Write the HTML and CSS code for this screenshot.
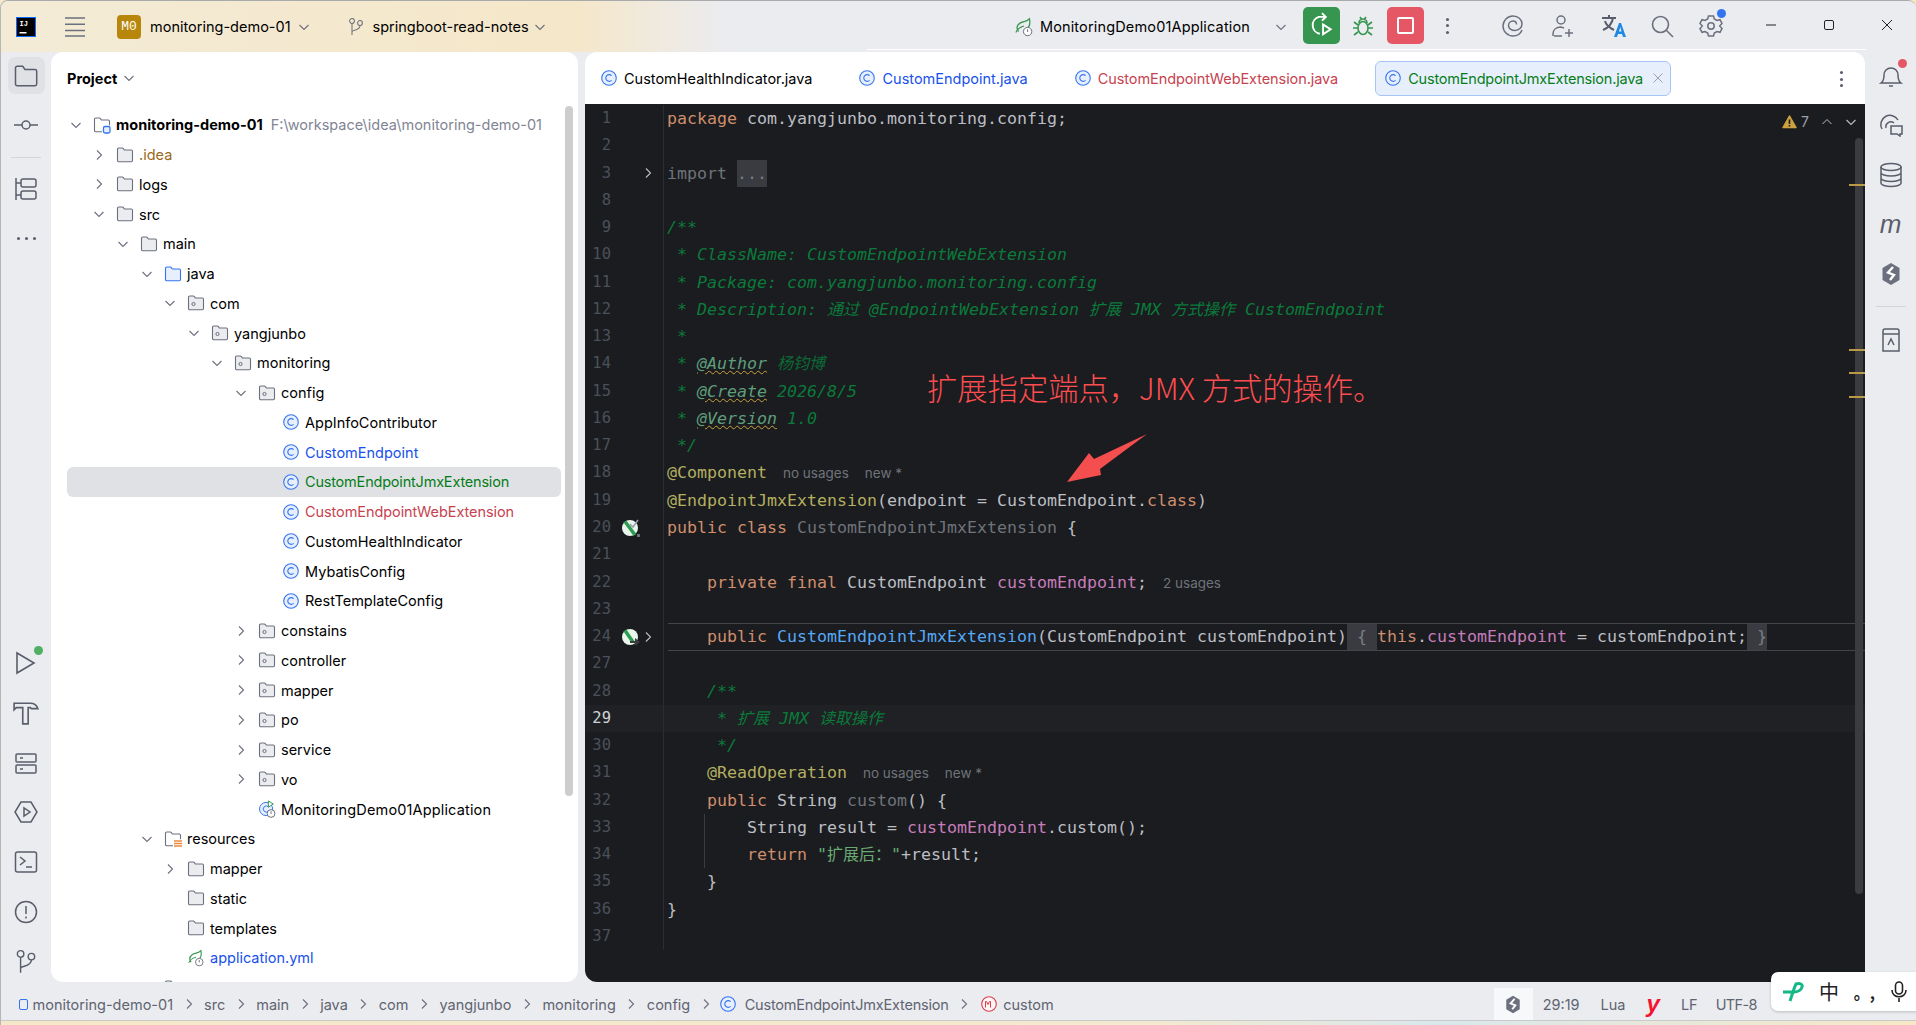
FILE: index.html
```html
<!DOCTYPE html>
<html lang="zh-CN">
<head>
    <meta charset="UTF-8">
    <meta name="viewport" content="width=device-width, initial-scale=1.0">
    <link rel="stylesheet" href="styles.css">
    <title>monitoring-demo-01</title>
</head>
<body>
<svg class="defs" width="0" height="0">
    <defs>
        <symbol id="folder" viewBox="0 0 18 18"><path d="M1.500 14.500V3.200C1.500 2.500 2 2 2.700 2h3.600c.5 0 .8.2 1.100.6l1 1.400h6.900c.9 0 1.200.5 1.200 1.200v9.300c0 .7-.5 1.200-1.200 1.200H2.700c-.7 0-1.200-.5-1.200-1.200z" fill="#EBECF0" stroke="#6C707E" stroke-width="1.100"/></symbol>
        <symbol id="folder-blue" viewBox="0 0 18 18"><path d="M1.500 14.500V3.200C1.500 2.500 2 2 2.700 2h3.600c.5 0 .8.2 1.100.6l1 1.400h6.900c.9 0 1.200.5 1.200 1.200v9.300c0 .7-.5 1.200-1.200 1.200H2.700c-.7 0-1.200-.5-1.200-1.200z" fill="#E7EFFD" stroke="#3574F0" stroke-width="1.100"/></symbol>
        <symbol id="root" viewBox="0 0 18 18"><path d="M1.500 14.500V3.200C1.500 2.500 2 2 2.700 2h3.600c.5 0 .8.2 1.100.6l1 1.400h6.900c.9 0 1.200.5 1.200 1.200v4.100M9 15.700H2.700c-.7 0-1.200-.5-1.200-1.200" fill="none" stroke="#6C707E" stroke-width="1.100"/><rect x="10.500" y="10.500" width="6.500" height="6.500" rx="1.500" fill="#E7EFFD" stroke="#3574F0" stroke-width="1.300"/></symbol>
        <symbol id="res" viewBox="0 0 18 18"><path d="M1.500 14.500V3.200C1.500 2.500 2 2 2.700 2h3.600c.5 0 .8.2 1.100.6l1 1.400h6.900c.9 0 1.200.5 1.200 1.200v4.100M9 15.700H2.700c-.7 0-1.200-.5-1.200-1.200" fill="none" stroke="#6C707E" stroke-width="1.100"/><path d="M10 11h8M10 13.500h8M10 16h8" stroke="#E98A3C" stroke-width="1.500"/></symbol>
        <symbol id="pkg" viewBox="0 0 18 18"><path d="M1.500 14.500V3.200C1.500 2.500 2 2 2.700 2h3.600c.5 0 .8.2 1.100.6l1 1.400h6.900c.9 0 1.200.5 1.200 1.200v9.300c0 .7-.5 1.200-1.200 1.200H2.700c-.7 0-1.200-.5-1.200-1.200z" fill="#EBECF0" stroke="#6C707E" stroke-width="1.100"/><circle cx="6.500" cy="10" r="1.600" fill="none" stroke="#6C707E"/></symbol>
        <symbol id="cls" viewBox="0 0 18 18"><circle cx="9" cy="9" r="7.300" fill="#E7EFFD" stroke="#3574F0" stroke-width="1.100"/><path d="M11.600 6.600a3.400 3.400 0 1 0 0 4.800" fill="none" stroke="#3574F0" stroke-width="1.100"/></symbol>
        <symbol id="app" viewBox="0 0 20 20"><circle cx="9" cy="10" r="7.300" fill="#E7EFFD" stroke="#3574F0" stroke-width="1.100"/><path d="M11.600 7.600a3.400 3.400 0 1 0 0 4.800" fill="none" stroke="#3574F0" stroke-width="1.100"/><path d="M11.500 1v7l5.500-3.500z" fill="#fff" stroke="#369650" stroke-width="1.100"/><circle cx="14.500" cy="15" r="4.300" fill="#fff" stroke="#6C707E" stroke-width="1.100"/><path d="M14.500 12.500v3" stroke="#6C707E" stroke-width="1.100"/></symbol>
        <symbol id="arrow-right" viewBox="0 0 12 12"><path d="M4 1.500 8.500 6 4 10.500" fill="none" stroke="currentColor" stroke-width="1.100"/></symbol>
        <symbol id="arrow-down" viewBox="0 0 12 12"><path d="M1.500 4 6 8.500 10.500 4" fill="none" stroke="currentColor" stroke-width="1.100"/></symbol>
        <symbol id="hex" viewBox="0 0 20 24"><path d="M10 1 18.500 6v12L10 23 1.500 18V6z" fill="#6C707E"/><path d="M12 5 7 10.500l6 2.500-4 5" fill="none" stroke="#fff" stroke-width="2.400"/></symbol>
        <symbol id="spring" viewBox="0 0 22 22"><path d="M5 16C1 11 5 6 11 5c3-.5 5-2 6-3 1 5 0 9-3 11" fill="none" stroke="#369650" stroke-width="1.400"/><path d="M2 17c2-4 5-6 9-7" fill="none" stroke="#369650" stroke-width="1.200"/><circle cx="15" cy="16" r="4.600" fill="#fff" stroke="#6C707E" stroke-width="1.100"/><path d="M15 13.500v3" stroke="#6C707E" stroke-width="1.100"/></symbol>
        <symbol id="branch" viewBox="0 0 20 24"><circle cx="5" cy="4.500" r="3" fill="none" stroke="currentColor" stroke-width="1.300"/><circle cx="15" cy="7" r="3" fill="none" stroke="currentColor" stroke-width="1.300"/><path d="M5 7.500V22M5 18c0-3 10-1 10-8" fill="none" stroke="currentColor" stroke-width="1.300"/></symbol>
        <symbol id="gut-impl" viewBox="0 0 20 20"><circle cx="9" cy="10" r="8" fill="#E9F6EC"/><path d="M4 3.500 14 17" stroke="#2E9C52" stroke-width="3.500"/><path d="M9 6l3 3 5-7" fill="none" stroke="#9DA0A8" stroke-width="1.500"/><path d="M16 16h3v3h-3z" fill="#6F737A"/></symbol>
        <symbol id="gut-arrow" viewBox="0 0 20 20"><circle cx="9" cy="10" r="8" fill="#E9F6EC"/><path d="M4 3.500 12 15" stroke="#2E9C52" stroke-width="3.500"/><path d="M9 14h5v-3l5 4-5 4v-3H9z" fill="#3A3C3F"/></symbol>
    </defs>
</svg>

<div class="window">

    <header class="titlebar">
        <svg class="ide-logo" viewBox="0 0 20 20" width="20" height="20"><rect x=".5" y=".5" width="19" height="19" fill="#000" stroke="#0A6CFF"/><text x="3.500" y="9" class="ide-logo-text">IJ</text><rect x="3.500" y="15" width="7" height="1.500" fill="#fff"/></svg>
        <svg class="burger" viewBox="0 0 20 20" width="20" height="20"><path d="M0 1h20M0 7.300h20M0 13.600h20M0 19h20" stroke="#6C707E" stroke-width="1.500"/></svg>
        <span class="project-badge">M0</span>
        <span class="tb-text tb-project">monitoring-demo-01</span>
        <svg class="chev tb-chev1" width="12" height="12"><use href="#arrow-down"/></svg>
        <svg class="branch-icon" width="16" height="20"><use href="#branch"/></svg>
        <span class="tb-text tb-branch">springboot-read-notes</span>
        <svg class="chev tb-chev2" width="12" height="12"><use href="#arrow-down"/></svg>

        <div class="tb-spacer"></div>

        <svg class="tb-run-icon" width="20" height="20"><use href="#spring"/></svg>
        <span class="tb-text tb-config t-wide">MonitoringDemo01Application</span>
        <svg class="chev tb-chev3" width="12" height="12"><use href="#arrow-down"/></svg>
        <span class="btn-run">
            <svg viewBox="0 0 24 24" width="26" height="26" fill="none" stroke="#fff" stroke-width="1.800"><path d="M10 20A8 8 0 0 1 9 4.500h6M12 1l3.500 3.500L12 8"/><path d="M13 11.500v9l7-4.500z"/></svg>
        </span>
        <svg class="bug" viewBox="0 0 22 22" width="22" height="22" fill="none" stroke="#369650" stroke-width="1.600"><ellipse cx="11" cy="13" rx="5" ry="6.500"/><path d="M7 8a4 4 0 0 1 8 0M8 2l2 3M14 2l-2 3M1 13h5M16 13h5M2 7l4 3M20 7l-4 3M2 20l4-3M20 20l-4-3"/></svg>
        <span class="btn-stop"><i class="stop-square"></i></span>
        <span class="dots-v tb-more"><i></i><i></i><i></i></span>
        <svg class="tb-ic tb-swirl" viewBox="0 0 22 22" width="22" height="22" fill="none" stroke="#6C707E" stroke-width="1.500"><path d="M20 15c-1.500 4-5 6-9 6-5.500 0-10-4.500-10-10S5.500 1 11 1c5 0 9 3.500 9 8 0 3.500-3 6.500-7 6.500-3.500 0-6.500-2-6.500-5 0-2.500 2-4.500 4.500-4.500 2 0 3.500 1.500 3.500 3.500"/></svg>
        <svg class="tb-ic tb-person" viewBox="0 0 24 24" width="24" height="24" fill="none" stroke="#6C707E" stroke-width="1.500"><circle cx="10" cy="6" r="4"/><path d="M2 22v-2c0-4 3-7 8-7l3 1M11 22H3M18 15v8M14 19h8"/></svg>
        <svg class="tb-ic tb-trans" viewBox="0 0 26 26" width="26" height="26"><path d="M2 5h14M9 2v3M13 5c-1 6-5 10-10 12M5 8c1 4 5 7 9 9" fill="none" stroke="#5A5D6B" stroke-width="2"/><path d="M14 24l5-14h2l5 14h-3l-1-3h-4l-1 3zM19 18.500h2.500L20.300 14z" fill="#1E88E5"/></svg>
        <svg class="tb-ic tb-search" viewBox="0 0 24 24" width="24" height="24" fill="none" stroke="#6C707E" stroke-width="1.600"><circle cx="10.500" cy="10.500" r="8"/><path d="M16.500 16.500 23 23"/></svg>
        <span class="tb-gear">
            <svg viewBox="0 0 24 24" width="24" height="24" fill="none" stroke="#6C707E" stroke-width="1.500"><path d="M9.500 2h5l.8 3 2.700 1.500 3-.8 2 3.800-2.300 2.500 2.300 2.500-2 3.800-3-.8L15.300 19l-.8 3h-5l-.8-3L6 17.500l-3 .8-2-3.800L3.300 12 1 9.500l2-3.800 3 .8L8.700 5z"/><circle cx="12" cy="12" r="3.200"/></svg>
            <i class="dot-blue"></i>
        </span>
        <div class="win-controls">
            <svg width="12" height="12"><path d="M1 6h10" stroke="#222" stroke-width="1"/></svg>
            <svg width="12" height="12"><rect x="1.500" y="1.500" width="9" height="9" rx="1.500" fill="none" stroke="#222"/></svg>
            <svg width="12" height="12"><path d="M1 1l10 10M11 1 1 11" stroke="#222"/></svg>
        </div>
    </header>

    <div class="workspace">

        <aside class="stripe stripe-left">
            <div class="stripe-group">
                <span class="stripe-btn active"><svg viewBox="0 0 24 24" width="24" height="24" fill="none" stroke="#5A5D6B" stroke-width="1.500"><path d="M1.500 20V4c0-1 .7-1.700 1.700-1.700h5.500L11 5.500h10c1 0 1.700.7 1.700 1.700V20c0 1-.7 1.700-1.700 1.700H3.200c-1 0-1.700-.7-1.700-1.700z"/></svg></span>
                <span class="stripe-btn"><svg viewBox="0 0 24 24" width="24" height="24" fill="none" stroke="#5A5D6B" stroke-width="1.500"><circle cx="12" cy="12" r="4"/><path d="M0 12h8M16 12h8"/></svg></span>
                <span class="stripe-sep"></span>
                <span class="stripe-btn"><svg viewBox="0 0 24 24" width="24" height="24" fill="none" stroke="#5A5D6B" stroke-width="1.500"><path d="M2 1v22M2 6h5M2 18h5"/><rect x="7" y="2" width="15" height="8" rx="2"/><rect x="7" y="14" width="15" height="8" rx="2"/></svg></span>
                <span class="stripe-btn"><span class="dots-h"><i></i><i></i><i></i></span></span>
            </div>
            <div class="stripe-group">
                <span class="stripe-btn run-ic"><svg viewBox="0 0 24 24" width="24" height="24" fill="none" stroke="#5A5D6B" stroke-width="1.600"><path d="M3 2v20l17-10z"/></svg><i class="dot-green"></i></span>
                <span class="stripe-btn"><svg viewBox="0 0 24 24" width="26" height="26" fill="none" stroke="#5A5D6B" stroke-width="1.500"><path d="M1 3h15c3 0 6 2 7 5h-6l-1-1h-2v15H9V7H3L1 9z"/></svg></span>
                <span class="stripe-btn"><svg viewBox="0 0 24 24" width="24" height="24" fill="none" stroke="#5A5D6B" stroke-width="1.500"><rect x="2" y="3" width="20" height="8" rx="1"/><rect x="2" y="14" width="20" height="8" rx="1"/><path d="M6 7h3M6 18h3"/></svg></span>
                <span class="stripe-btn"><svg viewBox="0 0 24 24" width="24" height="24" fill="none" stroke="#5A5D6B" stroke-width="1.500"><path d="M7 2h10l6 10-6 10H7L1 12z"/><path d="M10 8v8l6-4z"/></svg></span>
                <span class="stripe-btn"><svg viewBox="0 0 24 24" width="24" height="24" fill="none" stroke="#5A5D6B" stroke-width="1.500"><rect x="1.500" y="2" width="21" height="20" rx="2"/><path d="M6 7l5 4-5 4M12 17h6"/></svg></span>
                <span class="stripe-btn"><svg viewBox="0 0 24 24" width="24" height="24" fill="none" stroke="#5A5D6B" stroke-width="1.500"><circle cx="12" cy="12" r="10.500"/><path d="M12 6v8M12 16.500v2"/></svg></span>
                <span class="stripe-btn stripe-last"><svg class="stripe-git" width="22" height="26"><use href="#branch"/></svg></span>
            </div>
        </aside>

        <section class="project-panel">
            <div class="panel-head"><b>Project</b><svg class="chev" width="12" height="12"><use href="#arrow-down"/></svg></div>
            <div class="tree">
                <div class="tree-row lvl0"><svg class="chev" width="12" height="12"><use href="#arrow-down"/></svg><svg class="ti" width="18" height="18"><use href="#root"/></svg><b>monitoring-demo-01</b><span class="path">F:\workspace\idea\monitoring-demo-01</span></div>
                <div class="tree-row lvl1"><svg class="chev" width="12" height="12"><use href="#arrow-right"/></svg><svg class="ti" width="18" height="18"><use href="#folder"/></svg><span class="t-idea">.idea</span></div>
                <div class="tree-row lvl1"><svg class="chev" width="12" height="12"><use href="#arrow-right"/></svg><svg class="ti" width="18" height="18"><use href="#folder"/></svg>logs</div>
                <div class="tree-row lvl1"><svg class="chev" width="12" height="12"><use href="#arrow-down"/></svg><svg class="ti" width="18" height="18"><use href="#folder"/></svg>src</div>
                <div class="tree-row lvl2"><svg class="chev" width="12" height="12"><use href="#arrow-down"/></svg><svg class="ti" width="18" height="18"><use href="#folder"/></svg>main</div>
                <div class="tree-row lvl3"><svg class="chev" width="12" height="12"><use href="#arrow-down"/></svg><svg class="ti" width="18" height="18"><use href="#folder-blue"/></svg>java</div>
                <div class="tree-row lvl4"><svg class="chev" width="12" height="12"><use href="#arrow-down"/></svg><svg class="ti" width="18" height="18"><use href="#pkg"/></svg>com</div>
                <div class="tree-row lvl5"><svg class="chev" width="12" height="12"><use href="#arrow-down"/></svg><svg class="ti" width="18" height="18"><use href="#pkg"/></svg>yangjunbo</div>
                <div class="tree-row lvl6"><svg class="chev" width="12" height="12"><use href="#arrow-down"/></svg><svg class="ti" width="18" height="18"><use href="#pkg"/></svg>monitoring</div>
                <div class="tree-row lvl7"><svg class="chev" width="12" height="12"><use href="#arrow-down"/></svg><svg class="ti" width="18" height="18"><use href="#pkg"/></svg>config</div>
                <div class="tree-row lvl8"><span class="no-chev"></span><svg class="ti" width="18" height="18"><use href="#cls"/></svg>AppInfoContributor</div>
                <div class="tree-row lvl8"><span class="no-chev"></span><svg class="ti" width="18" height="18"><use href="#cls"/></svg><span class="t-blue">CustomEndpoint</span></div>
                <div class="tree-row lvl8 selected"><span class="no-chev"></span><svg class="ti" width="18" height="18"><use href="#cls"/></svg><span class="t-green t-narrow">CustomEndpointJmxExtension</span></div>
                <div class="tree-row lvl8"><span class="no-chev"></span><svg class="ti" width="18" height="18"><use href="#cls"/></svg><span class="t-red t-tight">CustomEndpointWebExtension</span></div>
                <div class="tree-row lvl8"><span class="no-chev"></span><svg class="ti" width="18" height="18"><use href="#cls"/></svg>CustomHealthIndicator</div>
                <div class="tree-row lvl8"><span class="no-chev"></span><svg class="ti" width="18" height="18"><use href="#cls"/></svg>MybatisConfig</div>
                <div class="tree-row lvl8"><span class="no-chev"></span><svg class="ti" width="18" height="18"><use href="#cls"/></svg>RestTemplateConfig</div>
                <div class="tree-row lvl7"><svg class="chev" width="12" height="12"><use href="#arrow-right"/></svg><svg class="ti" width="18" height="18"><use href="#pkg"/></svg>constains</div>
                <div class="tree-row lvl7"><svg class="chev" width="12" height="12"><use href="#arrow-right"/></svg><svg class="ti" width="18" height="18"><use href="#pkg"/></svg>controller</div>
                <div class="tree-row lvl7"><svg class="chev" width="12" height="12"><use href="#arrow-right"/></svg><svg class="ti" width="18" height="18"><use href="#pkg"/></svg>mapper</div>
                <div class="tree-row lvl7"><svg class="chev" width="12" height="12"><use href="#arrow-right"/></svg><svg class="ti" width="18" height="18"><use href="#pkg"/></svg>po</div>
                <div class="tree-row lvl7"><svg class="chev" width="12" height="12"><use href="#arrow-right"/></svg><svg class="ti" width="18" height="18"><use href="#pkg"/></svg>service</div>
                <div class="tree-row lvl7"><svg class="chev" width="12" height="12"><use href="#arrow-right"/></svg><svg class="ti" width="18" height="18"><use href="#pkg"/></svg>vo</div>
                <div class="tree-row lvl7"><span class="no-chev"></span><svg class="ti" width="18" height="18"><use href="#app"/></svg><span class="t-wide">MonitoringDemo01Application</span></div>
                <div class="tree-row lvl3"><svg class="chev" width="12" height="12"><use href="#arrow-down"/></svg><svg class="ti" width="18" height="18"><use href="#res"/></svg>resources</div>
                <div class="tree-row lvl4"><svg class="chev" width="12" height="12"><use href="#arrow-right"/></svg><svg class="ti" width="18" height="18"><use href="#folder"/></svg>mapper</div>
                <div class="tree-row lvl4"><span class="no-chev"></span><svg class="ti" width="18" height="18"><use href="#folder"/></svg>static</div>
                <div class="tree-row lvl4"><span class="no-chev"></span><svg class="ti" width="18" height="18"><use href="#folder"/></svg>templates</div>
                <div class="tree-row lvl4"><span class="no-chev"></span><svg class="ti" width="18" height="18"><use href="#spring"/></svg><span class="t-link">application.yml</span></div>
                <div class="tree-row lvl3"><span class="no-chev"></span><svg class="ti" width="18" height="18"><use href="#folder"/></svg></div>
            </div>
            <div class="tree-scroll"></div>
        </section>

        <section class="editor-panel">
            <div class="tabs">
                <div class="tab"><svg width="18" height="18"><use href="#cls"/></svg>CustomHealthIndicator.java</div>
                <div class="tab t-blue"><svg width="18" height="18"><use href="#cls"/></svg>CustomEndpoint.java</div>
                <div class="tab t-red t-tight"><svg width="18" height="18"><use href="#cls"/></svg>CustomEndpointWebExtension.java</div>
                <div class="tab tab-active t-green t-narrow"><svg width="18" height="18"><use href="#cls"/></svg>CustomEndpointJmxExtension.java<svg class="tab-x" width="12" height="12"><path d="M1.500 1.500l9 9M10.500 1.500l-9 9" stroke="#9DA0A8"/></svg></div>
                <span class="dots-v tabs-more"><i></i><i></i><i></i></span>
            </div>
            <div class="code">
                <div class="line"><span class="ln">1</span><span class="gut"></span><span class="src"><k>package</k> com.yangjunbo.monitoring.config;</span></div>
                <div class="line"><span class="ln">2</span><span class="gut"></span><span class="src"></span></div>
                <div class="line"><span class="ln">3</span><span class="gut"><svg class="fold" width="12" height="12"><use href="#arrow-right"/></svg></span><span class="src"><k class="dim">import</k> <span class="folded">...</span></span></div>
                <div class="line"><span class="ln">8</span><span class="gut"></span><span class="src"></span></div>
                <div class="line"><span class="ln">9</span><span class="gut"></span><span class="src"><d>/**</d></span></div>
                <div class="line"><span class="ln">10</span><span class="gut"></span><span class="src"><d> * ClassName: CustomEndpointWebExtension</d></span></div>
                <div class="line"><span class="ln">11</span><span class="gut"></span><span class="src"><d> * Package: com.yangjunbo.monitoring.config</d></span></div>
                <div class="line"><span class="ln">12</span><span class="gut"></span><span class="src"><d> * Description: <c>通过</c> @EndpointWebExtension <c>扩展</c> JMX <c>方式操作</c> CustomEndpoint</d></span></div>
                <div class="line"><span class="ln">13</span><span class="gut"></span><span class="src"><d> *</d></span></div>
                <div class="line"><span class="ln">14</span><span class="gut"></span><span class="src"><d> * <u>@Author</u> <c class="tag-cjk">杨钧博</c></d></span></div>
                <div class="line"><span class="ln">15</span><span class="gut"></span><span class="src"><d> * <u>@Create</u> 2026/8/5</d></span></div>
                <div class="line"><span class="ln">16</span><span class="gut"></span><span class="src"><d> * <u>@Version</u> 1.0</d></span></div>
                <div class="line"><span class="ln">17</span><span class="gut"></span><span class="src"><d> */</d></span></div>
                <div class="line"><span class="ln">18</span><span class="gut"></span><span class="src"><a>@Component</a><span class="hint">no usages</span><span class="hint">new *</span></span></div>
                <div class="line"><span class="ln">19</span><span class="gut"></span><span class="src"><a>@EndpointJmxExtension</a>(endpoint = CustomEndpoint.<k>class</k>)</span></div>
                <div class="line"><span class="ln">20</span><span class="gut"><svg width="20" height="20"><use href="#gut-impl"/></svg></span><span class="src"><k>public class</k> <span class="unused">CustomEndpointJmxExtension</span> {</span></div>
                <div class="line"><span class="ln">21</span><span class="gut"></span><span class="src"></span></div>
                <div class="line"><span class="ln">22</span><span class="gut"></span><span class="src">    <k>private final</k> CustomEndpoint <f>customEndpoint</f>;<span class="hint">2 usages</span></span></div>
                <div class="line"><span class="ln">23</span><span class="gut"></span><span class="src"></span></div>
                <div class="line line-sep"><span class="ln">24</span><span class="gut"><svg width="20" height="20"><use href="#gut-arrow"/></svg><svg class="fold" width="12" height="12"><use href="#arrow-right"/></svg></span><span class="src">    <k>public</k> <m>CustomEndpointJmxExtension</m>(CustomEndpoint customEndpoint)<span class="folded"> { </span><k>this</k>.<f>customEndpoint</f> = customEndpoint;<span class="folded"> }</span></span></div>
                <div class="line line-sep"><span class="ln">27</span><span class="gut"></span><span class="src"></span></div>
                <div class="line"><span class="ln">28</span><span class="gut"></span><span class="src">    <d>/**</d></span></div>
                <div class="line current"><span class="ln">29</span><span class="gut"></span><span class="src">    <d> * <c>扩展</c> JMX <c>读取操作</c></d></span></div>
                <div class="line"><span class="ln">30</span><span class="gut"></span><span class="src">    <d> */</d></span></div>
                <div class="line"><span class="ln">31</span><span class="gut"></span><span class="src">    <a>@ReadOperation</a><span class="hint">no usages</span><span class="hint">new *</span></span></div>
                <div class="line"><span class="ln">32</span><span class="gut"></span><span class="src">    <k>public</k> String <span class="unused">custom</span>() {</span></div>
                <div class="line guide"><span class="ln">33</span><span class="gut"></span><span class="src">        String result = <f>customEndpoint</f>.custom();</span></div>
                <div class="line guide"><span class="ln">34</span><span class="gut"></span><span class="src">        <k>return</k> <s>"<c>扩展后：</c>"</s>+result;</span></div>
                <div class="line"><span class="ln">35</span><span class="gut"></span><span class="src">    }</span></div>
                <div class="line"><span class="ln">36</span><span class="gut"></span><span class="src">}</span></div>
                <div class="line"><span class="ln">37</span><span class="gut"></span><span class="src"></span></div>

                <div class="inspect">
                    <svg width="15" height="14" viewBox="0 0 15 14"><path d="M7.500 1 14 12.500H1z" fill="#C9A23F" stroke="#C9A23F" stroke-width="1.500" stroke-linejoin="round"/><path d="M7.500 4.500v4.500M7.500 10v1.600" stroke="#1A1C1F" stroke-width="1.600"/></svg>
                    <span>7</span>
                    <svg class="chev" width="12" height="12"><path d="M1.500 8 6 3.500 10.500 8" fill="none" stroke="#BCBEC4"/></svg>
                    <svg class="chev" width="12" height="12"><use href="#arrow-down"/></svg>
                </div>
                <div class="code-scroll"></div>
                <i class="mark m1"></i><i class="mark m2"></i><i class="mark m3"></i><i class="mark m4"></i>

                <div class="note">扩展指定端点，JMX 方式的操作。</div>
                <svg class="note-arrow" width="90" height="56" viewBox="0 0 90 56"><path d="M87 4 40 39l1 6L7 52l22-29 5 6z" fill="#F44E4E"/></svg>
            </div>
        </section>

        <aside class="stripe stripe-right">
            <span class="stripe-btn bell"><svg viewBox="0 0 24 24" width="24" height="24" fill="none" stroke="#5A5D6B" stroke-width="1.500"><path d="M2 19c3-2 3-5 3-8 0-4 3-7 7-7s7 3 7 7c0 3 0 6 3 8zM10 22h4"/></svg><i class="dot-red"></i></span>
            <span class="stripe-btn"><svg viewBox="0 0 24 24" width="24" height="24" fill="none" stroke="#5A5D6B" stroke-width="1.500"><path d="M3 16a9 9 0 0 1 16-9M7 15a5 5 0 0 1 8-5"/><path d="M12 13h11v8h-2v2l-3-2h-6z"/></svg></span>
            <span class="stripe-btn"><svg viewBox="0 0 24 26" width="24" height="26" fill="none" stroke="#5A5D6B" stroke-width="1.500"><ellipse cx="12" cy="5" rx="10" ry="3.500"/><path d="M2 5v16c0 2 4.500 3.500 10 3.500S22 23 22 21V5M2 10.500c0 2 4.500 3.500 10 3.500s10-1.500 10-3.500M2 16c0 2 4.500 3.500 10 3.500S22 18 22 16"/></svg></span>
            <span class="stripe-btn stripe-m">m</span>
            <span class="stripe-btn"><svg width="20" height="24"><use href="#hex"/></svg></span>
            <span class="stripe-sep stripe-sep-right"></span>
            <span class="stripe-btn"><svg viewBox="0 0 24 24" width="24" height="24" fill="none" stroke="#5A5D6B" stroke-width="1.500"><path d="M4 23V3c0-1 .7-2 2-2h12c1.300 0 2 1 2 2v20zM4 6h16M9 17l3-6 3 6"/></svg></span>
        </aside>
    </div>

    <footer class="statusbar">
        <div class="crumbs">
            <i class="module-dot"></i><span>monitoring-demo-01</span>
            <svg class="chev" width="12" height="12"><use href="#arrow-right"/></svg><span>src</span>
            <svg class="chev" width="12" height="12"><use href="#arrow-right"/></svg><span>main</span>
            <svg class="chev" width="12" height="12"><use href="#arrow-right"/></svg><span>java</span>
            <svg class="chev" width="12" height="12"><use href="#arrow-right"/></svg><span>com</span>
            <svg class="chev" width="12" height="12"><use href="#arrow-right"/></svg><span>yangjunbo</span>
            <svg class="chev" width="12" height="12"><use href="#arrow-right"/></svg><span>monitoring</span>
            <svg class="chev" width="12" height="12"><use href="#arrow-right"/></svg><span>config</span>
            <svg class="chev" width="12" height="12"><use href="#arrow-right"/></svg><svg class="crumb-cls" width="18" height="18"><use href="#cls"/></svg><span class="t-narrow">CustomEndpointJmxExtension</span>
            <svg class="chev" width="12" height="12"><use href="#arrow-right"/></svg><svg class="crumb-method" width="18" height="18" viewBox="0 0 18 18"><circle cx="9" cy="9" r="7.300" fill="#FFF5F5" stroke="#DB3B4B" stroke-width="1.100"/><path d="M5.500 12.500v-6h1l1.500 3 1.500-3h1v6" fill="none" stroke="#DB3B4B" stroke-width="1"/></svg><span>custom</span>
        </div>
        <div class="status-right">
            <span class="hex-cell"><svg width="16" height="19"><use href="#hex"/></svg></span>
            <span class="st-pos">29:19</span>
            <span class="st-lua">Lua</span>
            <span class="st-y">y</span>
            <span class="st-lf">LF</span>
            <span class="st-enc">UTF-8</span>
        </div>
    </footer>

    <div class="desktop-strip"></div>

    <div class="ime">
        <svg width="22" height="20" viewBox="0 0 22 20" fill="none" stroke="#12B886" stroke-width="3"><path d="M8 19C10 13 12 6 14 2c4-1 7 0 6 3-1 4-5 5-9 5M1 10h12"/></svg>
        <span class="ime-zh">中</span>
        <span class="ime-punct">。,</span>
        <svg width="18" height="22" viewBox="0 0 18 22" fill="none" stroke="#222" stroke-width="1.600"><rect x="5.500" y="1" width="7" height="12" rx="3.500"/><path d="M2 9c0 9 14 9 14 0M9 17v4"/></svg>
    </div>
</div>
</body>
</html>
```

FILE: styles.css
```css
* {
    box-sizing: border-box;
}

html, body {
    margin: 0;
    height: 100%;
    overflow: hidden;
}

body {
    font-family: Inter, "Noto Sans CJK SC", sans-serif;
    font-size: 14.5px;
    color: #000;
    background: #F5E9C8;
}

.defs {
    position: absolute;
}

i {
    display: block;
}

.window {
    position: relative;
    height: 1025px;
    display: flex;
    flex-direction: column;
    background: #EBECF0;
    border-top: 1px solid #A9AAAC;
    border-left: 1px solid #B5B6B8;
    border-top-left-radius: 8px;
    border-top-right-radius: 8px;
    overflow: hidden;
}

/* barra de titulo */
.titlebar {
    position: relative;
    flex: 0 0 51px;
    display: flex;
    align-items: center;
    padding-left: 15px;
    background: linear-gradient(90deg, #F3EBD6 0%, #F5E7C9 30%, #EBECF0 38%);
}

/* linea blanca fina debajo de la parte derecha */
.titlebar::after {
    content: "";
    position: absolute;
    left: 866px;
    right: 50px;
    bottom: 2px;
    height: 1px;
    background: #fff;
}

.ide-logo-text {
    font: bold 7px "Liberation Mono", monospace;
    fill: #fff;
}

.burger {
    margin-left: 29px;
}

.project-badge {
    width: 24px;
    height: 24px;
    margin-left: 32px;
    border-radius: 4px;
    background: #B8860B;
    color: #fff;
    font: 13px/24px "Liberation Mono", monospace;
    text-align: center;
}

.tb-text {
    color: #000;
}

.tb-project {
    margin-left: 9px;
}

.tb-chev1 {
    margin-left: 7px;
}

.branch-icon {
    margin-left: 38px;
    color: #6C707E;
}

.tb-branch {
    margin-left: 9px;
}

.tb-chev2 {
    margin-left: 5px;
}

.tb-spacer {
    flex: 1;
}

.tb-config {
    margin-left: 6px;
}

.tb-chev3 {
    margin-left: 25px;
}

.btn-run, .btn-stop {
    width: 37px;
    height: 37px;
    margin-top: -3px;
    border-radius: 5px;
    display: flex;
    align-items: center;
    justify-content: center;
}

.btn-run {
    margin-left: 16px;
    background: #369650;
}

.bug {
    margin-left: 12px;
    margin-bottom: 2px;
}

.btn-stop {
    margin-left: 13px;
    background: #E55765;
}

.stop-square {
    width: 17px;
    height: 17px;
    border: 2px solid #fff;
    border-radius: 2px;
}

.dots-v {
    display: flex;
    flex-direction: column;
    gap: 3.5px;
}

.dots-v i {
    width: 3px;
    height: 3px;
    border-radius: 50%;
    background: #5A5D6B;
}

.tb-more {
    margin-left: 22px;
    margin-bottom: 2px;
}

.tb-ic, .tb-gear {
    margin-bottom: 2px;
}

.tb-swirl {
    margin-left: 53px;
}

.tb-person {
    margin-left: 27px;
}

.tb-trans {
    margin-left: 25px;
}

.tb-search {
    margin-left: 24px;
}

.tb-gear {
    position: relative;
    margin-left: 25px;
    height: 24px;
}

.dot-blue {
    position: absolute;
    top: -5px;
    right: -3px;
    width: 9px;
    height: 9px;
    border-radius: 50%;
    background: #3574F0;
}

.win-controls {
    display: flex;
    gap: 46px;
    margin-left: 42px;
    margin-bottom: 4px;
    padding-right: 23px;
}

.chev {
    flex: none;
    color: #6C707E;
}

/* zona central */
.workspace {
    flex: 0 0 930px;
    display: flex;
    min-height: 0;
}

.stripe {
    display: flex;
    flex-direction: column;
    align-items: center;
}

.stripe-left {
    flex: 0 0 50px;
    justify-content: space-between;
    padding-top: 5px;
    padding-bottom: 2px;
}

.stripe-right {
    flex: 0 0 51px;
    padding-top: 5px;
}

.stripe-group {
    display: flex;
    flex-direction: column;
    align-items: center;
}

.stripe-btn {
    position: relative;
    width: 37px;
    height: 37px;
    margin-bottom: 12.700px;
    border-radius: 7px;
    display: flex;
    align-items: center;
    justify-content: center;
}

.stripe-btn.active {
    background: #DFE1E5;
}

.stripe-last {
    margin-bottom: 0;
}

.stripe-git {
    color: #5A5D6B;
}

.stripe-sep {
    width: 30px;
    height: 1px;
    margin: 1px 0 12px;
    background: #D3D5DB;
}

.stripe-sep-right {
    margin-top: 1px;
    margin-bottom: 14px;
}

.dots-h {
    display: flex;
    gap: 5px;
}

.dots-h i {
    width: 3px;
    height: 3px;
    border-radius: 50%;
    background: #5A5D6B;
}

.dot-green, .dot-red {
    position: absolute;
    width: 9px;
    height: 9px;
    border-radius: 50%;
}

.dot-green {
    top: 1px;
    right: 2px;
    background: #4FAF63;
}

.dot-red {
    top: 2px;
    right: 2px;
    background: #E55765;
}

.stripe-m {
    font: italic 26px "Liberation Sans", sans-serif;
    color: #5A5D6B;
}

/* panel del proyecto */
.project-panel {
    position: relative;
    flex: 0 0 527px;
    background: #fff;
    border-radius: 12px;
    overflow: hidden;
}

.panel-head {
    height: 52px;
    margin-bottom: 6px;
    padding-left: 16px;
    display: flex;
    align-items: center;
    gap: 6px;
}

.tree-row {
    height: 29.750px;
    display: flex;
    align-items: center;
    white-space: nowrap;
}

.tree-row .chev {
    margin-right: 11px;
}

.no-chev {
    width: 23px;
    flex: none;
}

.ti {
    flex: none;
    margin-right: 5px;
}

.lvl0 { padding-left: 19px; }
.lvl1 { padding-left: 42px; }
.lvl2 { padding-left: 66px; }
.lvl3 { padding-left: 90px; }
.lvl4 { padding-left: 113px; }
.lvl5 { padding-left: 137px; }
.lvl6 { padding-left: 160px; }
.lvl7 { padding-left: 184px; }
.lvl8 { padding-left: 208px; }

.tree-row.selected {
    margin: 0 17px 0 16px;
    padding-left: 192px;
    background: #DFE1E5;
    border-radius: 6px;
}

.path {
    margin-left: 8px;
    color: #818594;
}

.t-idea { color: #9A6A1C; }
.t-blue { color: #1750EB; }
.t-green { color: #067D17; }
.t-red { color: #C7424F; }
.t-link { color: #1750EB; }

/* ajustes de ancho de algunos nombres largos */
.t-narrow { letter-spacing: -.2px; }
.t-tight { letter-spacing: -.08px; }
.t-wide { letter-spacing: .15px; }

.tree-scroll {
    position: absolute;
    top: 54px;
    right: 5px;
    width: 8px;
    height: 690px;
    border-radius: 4px;
    background: #CDCDCD;
}

/* editor */
.editor-panel {
    flex: 0 0 1280px;
    margin-left: 7px;
    display: flex;
    flex-direction: column;
    background: #fff;
    border-radius: 12px 12px 0 12px;
    overflow: hidden;
}

.tabs {
    position: relative;
    flex: 0 0 52px;
    display: flex;
    align-items: center;
    padding-left: 15px;
    gap: 46px;
}

.tab {
    display: flex;
    align-items: center;
    gap: 6px;
    white-space: nowrap;
}

.tab-active {
    height: 35px;
    margin-left: -9px;
    padding: 0 6px 0 8px;
    background: #E7EFFD;
    border: 1px solid #A8C4F7;
    border-radius: 6px;
}

.tab-x {
    margin-left: 3px;
}

.tabs-more {
    position: absolute;
    right: 22px;
    top: 19px;
}

.code {
    position: relative;
    flex: 1;
    min-height: 0;
    padding-top: 1px;
    background: #1A1C1F;
    color: #BCBEC4;
    font-family: "DejaVu Sans Mono", "Noto Sans CJK SC", monospace;
    font-size: 16.620px;
    overflow: hidden;
}

.line {
    position: relative;
    height: 27.270px;
    display: flex;
    line-height: 27px;
    white-space: pre;
}

.ln {
    flex: 0 0 26px;
    text-align: right;
    color: #4B5059;
    font-size: 15.500px;
}

.gut {
    flex: 0 0 53px;
    height: 100%;
    display: flex;
    align-items: center;
    gap: 3px;
    padding-left: 10px;
    border-right: 1px solid #2B2D30;
    margin-right: 3px;
    position: relative;
}

.fold {
    position: absolute;
    right: 9px;
    color: #BCBEC4;
}

.line-sep::before {
    content: "";
    position: absolute;
    top: 0;
    left: 83px;
    right: 0;
    height: 1px;
    background: #43454A;
}

.current {
    background: #1F2124;
}

.current .ln {
    color: #D0D2D8;
}

.guide .src {
    position: relative;
}

.guide .src::before {
    content: "";
    position: absolute;
    left: 37px;
    top: 0;
    bottom: 0;
    width: 1px;
    background: #3A3C40;
}

k { color: #CF8E6D; }
k.dim { color: #6F737A; }
d { color: #0B7A3B; font-style: italic; }
d u { text-decoration: underline wavy #C9A23F 1px; color: #5F9E7C; }
c { font-size: 16px; }
.tag-cjk { color: #0B6B36; }
a { color: #B3AE60; }
f { color: #C77DBB; }
m { color: #56A8F5; }
s { color: #6AAB73; text-decoration: none; }

.unused {
    color: #6F737A;
}

.folded {
    display: inline-block;
    height: 27px;
    background: #393B40;
    color: #7A7E85;
}

.hint {
    margin-left: 16px;
    font-family: Inter, sans-serif;
    font-size: 13.500px;
    color: #6F737A;
}

.inspect {
    position: absolute;
    top: 8px;
    left: 1197px;
    display: flex;
    align-items: center;
    gap: 4px;
    font-family: Inter, sans-serif;
    font-size: 14px;
    line-height: 20px;
    color: #9DA0A8;
}

.inspect .chev {
    margin-left: 8px;
    color: #BCBEC4;
}

.code-scroll {
    position: absolute;
    top: 34px;
    right: 2px;
    width: 8px;
    height: 756px;
    border-radius: 4px;
    background: #3A3C3F;
}

.mark {
    position: absolute;
    right: 0;
    width: 16px;
    height: 2px;
    background: #B99A45;
}

.m1 { top: 80px; }
.m2 { top: 245px; }
.m3 { top: 268px; }
.m4 { top: 292px; }

/* anotacion roja sobre la captura */
.note {
    position: absolute;
    left: 342px;
    top: 262px;
    font-family: "Noto Sans CJK SC", sans-serif;
    font-size: 30.300px;
    font-weight: 300;
    line-height: 42px;
    color: #FF4D4F;
    white-space: nowrap;
}

.note-arrow {
    position: absolute;
    left: 475px;
    top: 326px;
}

/* barra inferior */
.statusbar {
    flex: 0 0 38px;
    display: flex;
    align-items: stretch;
    justify-content: space-between;
    padding-top: 6px;
    color: #5F6470;
}

.crumbs {
    display: flex;
    align-items: center;
    gap: 9.500px;
    padding-left: 18px;
}

.crumb-cls {
    margin: 0 -2px;
}

.crumb-method {
    margin-right: -4px;
}

.module-dot {
    width: 9px;
    height: 11px;
    margin-right: -5px;
    border: 1.500px solid #3574F0;
    border-radius: 2px;
}

.status-right {
    display: flex;
    align-items: center;
    gap: 21px;
    padding-right: 159px;
}

.hex-cell {
    width: 39px;
    height: 100%;
    background: #F7F8FA;
    display: flex;
    align-items: center;
    justify-content: center;
    margin-right: -11px;
}

.st-y {
    font: italic bold 24px "Liberation Sans", sans-serif;
    color: #F5142D;
    line-height: 20px;
}

.st-enc {
    margin-left: -3px;
    letter-spacing: -.6px;
}

.desktop-strip {
    flex: 1;
    background: linear-gradient(90deg, #F6E7C8 0%, #F3E9CE 60%, #D9E8EC 75%, #F7E8C6 100%);
    border-top: 1px solid #C9CACC;
}

.ime {
    position: absolute;
    left: 1770px;
    top: 971px;
    width: 146px;
    height: 39px;
    padding: 0 9px 0 11px;
    display: flex;
    align-items: center;
    justify-content: space-between;
    background: #fff;
    border-radius: 7px 0 0 7px;
    box-shadow: 0 1px 3px rgba(0, 0, 0, .2);
}

.ime-zh {
    font: 20px "Noto Sans CJK SC", sans-serif;
    color: #222;
}

.ime-punct {
    font: bold 16px "Noto Sans CJK SC", sans-serif;
    color: #222;
}
```
